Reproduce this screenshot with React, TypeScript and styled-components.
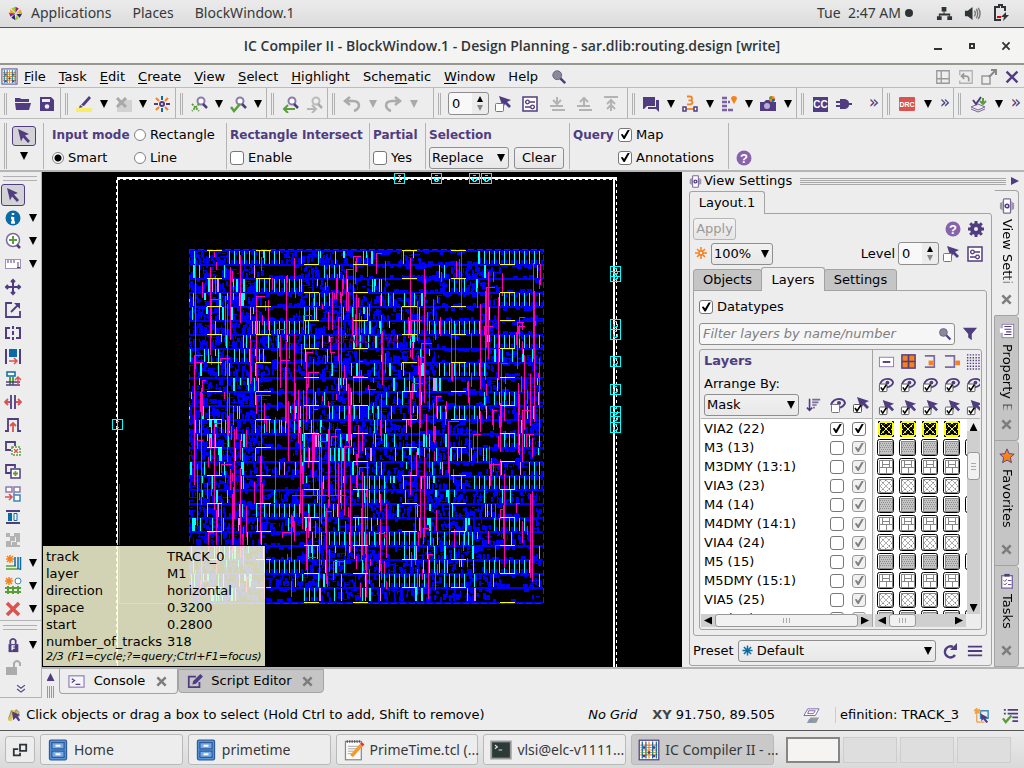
import React from "react";
import styled, { createGlobalStyle, css } from "styled-components";

const purple = "#503c80";
const line = "#a3a3a3";
const bg = "#ededed";
const uiFont = `"DejaVu Sans", sans-serif`;
const shellFont = `"Noto Sans", "Open Sans", sans-serif`;

const Global = createGlobalStyle`
  * { box-sizing: border-box; }
  body { margin: 0; background: ${bg}; }
  button, input, select { font: inherit; color: inherit; margin: 0; }
  svg { display: block; flex: none; }
`;

/* ---------- shell ---------- */
const Page = styled.div`
  height: 100vh;
  display: flex;
  flex-direction: column;
  overflow: hidden;
  font: 13px/16px ${uiFont};
  color: #000;
  background: ${bg};
`;
const TopBar = styled.header`
  flex: none;
  height: 28px;
  display: flex;
  align-items: center;
  gap: 21px;
  padding: 0 14px 1px 8px;
  background: linear-gradient(#ebebeb, #dcdcdc);
  border-bottom: 1px solid #555;
  font: 14px/20px ${shellFont};
  color: #35393b;
`;
const TopItem = styled.button`
  display: flex;
  align-items: center;
  gap: 8px;
  padding: 0;
  border: 0;
  background: none;
  white-space: pre;
`;
const Clock = styled(TopItem)`
  margin-left: auto;
  gap: 4px;
  &::after {
    content: "";
    width: 8px;
    height: 8px;
    border-radius: 50%;
    background: #2e3436;
  }
`;
const Tray = styled.div`
  display: flex;
  align-items: center;
  gap: 11px;
  margin-left: 2px;
`;
const TitleBar = styled.div`
  flex: none;
  height: 37px;
  display: grid;
  grid-template-columns: 100px 1fr 100px;
  align-items: center;
  background: #f4f4f3;
  border-bottom: 2px solid #97978f;
`;
const Title = styled.h1`
  grid-column: 2;
  margin: 0;
  text-align: center;
  white-space: nowrap;
  font: 600 14px/20px "Open Sans", "Noto Sans", sans-serif;
  color: #2f3638;
`;
const WinButtons = styled.div`
  display: flex;
  justify-content: flex-end;
  gap: 14px;
  padding-right: 8px;
`;
const PlainButton = styled.button<{ $w?: number; $h?: number; $on?: boolean }>`
  width: ${(p) => p.$w ?? 24}px;
  height: ${(p) => p.$h ?? 22}px;
  flex: none;
  display: flex;
  align-items: center;
  justify-content: center;
  padding: 0;
  border: 1px solid ${(p) => (p.$on ? purple : "transparent")};
  border-radius: 3px;
  background: ${(p) => (p.$on ? "#d3d2d6" : "none")};
  color: ${purple};
`;
const MenuBar = styled.nav`
  flex: none;
  height: 23px;
  display: flex;
  align-items: center;
  gap: 6px;
  padding: 1px 1px 0;
  border-bottom: 1px solid #bcbcbc;
`;
const Menus = styled.div`
  display: flex;
  align-items: center;
  gap: 13px;
`;
const MenuItem = styled.button`
  padding: 0;
  border: 0;
  background: none;
  u { text-underline-offset: 2px; }
`;
const MenuEnd = styled.div`
  margin-left: auto;
  display: flex;
`;

/* ---------- toolbars ---------- */
const ToolRow = styled.div`
  flex: none;
  height: 31px;
  display: flex;
  border-bottom: 1px solid #bcbcbc;
`;
const ToolGroup = styled.div<{ $w?: number }>`
  width: ${(p) => (p.$w ? `${p.$w}px` : "auto")};
  flex: ${(p) => (p.$w ? "none" : "1")};
  display: flex;
  align-items: center;
  padding-top: 1px;
  border-right: 1px solid #b4b4b4;
  &:last-child { border-right: 0; }
`;
const Handle = styled.span<{ $h?: number }>`
  width: 3px;
  height: ${(p) => p.$h ?? 22}px;
  flex: none;
  margin: 0 4px;
  border: solid #b0b0b0;
  border-width: 0 1px;
`;
const Arrow = styled.button<{ $off?: boolean; $w?: number }>`
  width: ${(p) => p.$w ?? 15}px;
  height: 20px;
  flex: none;
  display: flex;
  align-items: center;
  justify-content: center;
  padding: 0;
  border: 0;
  background: none;
  &::before {
    content: "";
    border: 4px solid transparent;
    border-top: 8px solid ${(p) => (p.$off ? "#aaa" : "#000")};
    border-bottom: 0;
  }
`;
const More = styled.button`
  width: 16px;
  margin-left: auto;
  padding: 0 0 4px;
  border: 0;
  background: none;
  color: ${purple};
  font-size: 17px;
`;
const SpinBox = styled.span<{ $w: number }>`
  width: ${(p) => p.$w}px;
  height: 23px;
  flex: none;
  margin: 0 0 0 3px;
  display: flex;
  align-items: center;
  border: 1px solid #8e8e8e;
  border-radius: 3px;
  background: linear-gradient(90deg, #f8f8f8 60%, #ececec 60%);
  input {
    width: 20px;
    flex: 1;
    min-width: 0;
    padding: 0 0 0 3px;
    border: 0;
    outline: 0;
    background: none;
  }
`;
const OptionBar = styled.div`
  flex: none;
  height: 53px;
  display: flex;
  align-items: center;
  padding-top: 3px;
  border-bottom: 2px solid #b5b5b5;
`;
const OptionGroup = styled.fieldset<{ $w: number; $cols?: string; $bare?: boolean; $wide?: boolean }>`
  width: ${(p) => p.$w}px;
  min-width: 0;
  height: 46px;
  margin: 0;
  padding: 0 0 0 ${(p) => (p.$wide ? 8 : p.$bare ? 0 : 3)}px;
  border: 0;
  border-left: ${(p) => (p.$bare ? "0" : "1px solid #b4b4b4")};
  display: grid;
  grid-template-columns: ${(p) => p.$cols ?? "1fr"};
  grid-template-rows: 23px 23px;
  align-items: center;
  white-space: nowrap;
`;
const Heading = styled.span<{ $size?: number }>`
  font-weight: 700;
  font-size: ${(p) => p.$size ?? 12}px;
  color: ${purple};
`;
const Choice = styled.label`
  display: flex;
  align-items: center;
  gap: 4px;
`;
const Check = styled.input.attrs({ type: "checkbox" })`
  appearance: none;
  width: 14px;
  height: 14px;
  flex: none;
  display: block;
  border: 1px solid #777;
  border-radius: 3px;
  background: #fff;
  &:checked::before {
    content: "";
    display: block;
    width: 12px;
    height: 12px;
    background: #000;
    clip-path: polygon(15% 50%, 30% 45%, 42% 63%, 72% 12%, 90% 12%, 48% 88%, 38% 88%);
  }
  &:disabled { border-color: #999; background: #f0f0f0; }
  &:disabled::before { background: #808080; }
`;
const Radio = styled.input.attrs({ type: "radio" })`
  appearance: none;
  width: 12px;
  height: 12px;
  flex: none;
  border: 1px solid #808080;
  border-radius: 50%;
  background: #fff;
  &:checked { background: radial-gradient(circle, #000 0 3px, #fff 4px); }
`;
const Actions = styled.div`
  display: flex;
  gap: 5px;
`;
const PushButton = styled.button<{ $w: number }>`
  width: ${(p) => p.$w}px;
  height: 22px;
  padding: 0;
  border: 1px solid #8e8e8e;
  border-radius: 3px;
  background: linear-gradient(#f2f2f2, #e6e6e6);
  &:disabled { color: #9a9a9a; border-color: #b5b5b5; }
`;
const SelectWrap = styled.span<{ $w?: number; $pad?: number }>`
  position: relative;
  width: ${(p) => (p.$w ? `${p.$w}px` : "auto")};
  flex: ${(p) => (p.$w ? "none" : "1")};
  display: block;
  select {
    appearance: none;
    display: block;
    width: 100%;
    height: 22px;
    padding: 0 0 0 ${(p) => p.$pad ?? 2}px;
    border: 1px solid #8e8e8e;
    border-radius: 3px;
    background: linear-gradient(#f1f1f1, #e8e8e8);
    outline: 0;
  }
  &::after {
    content: "";
    position: absolute;
    right: 4px;
    top: 7px;
    border: 4px solid transparent;
    border-top: 8px solid #000;
    border-bottom: 0;
    pointer-events: none;
  }
  svg { position: absolute; left: 3px; top: 4px; }
`;

/* ---------- work area ---------- */
const Middle = styled.div`
  flex: 1;
  min-height: 0;
  display: flex;
`;
const SideTools = styled.div`
  width: 42px;
  flex: none;
  display: flex;
  flex-direction: column;
  border-right: 1px solid #b4b4b4;
  border-bottom: 1px solid #b4b4b4;
  overflow: hidden;
`;
const SideHandle = styled.span<{ $line?: boolean }>`
  flex: none;
  height: ${(p) => (p.$line ? 13 : 11)}px;
  padding: 4px 4px 0 3px;
  border-top: ${(p) => (p.$line ? "1px solid #b4b4b4" : "0")};
  &::before {
    content: "";
    display: block;
    height: 3px;
    border: solid #b0b0b0;
    border-width: 1px 0;
  }
`;
const SideRow = styled.div`
  flex: none;
  height: 23px;
  display: flex;
  align-items: center;
  padding-left: 1px;
`;
const Center = styled.div`
  flex: 1;
  min-width: 0;
  display: flex;
  flex-direction: column;
`;
const Upper = styled.div`
  flex: 1;
  min-height: 0;
  display: flex;
`;
const Canvas = styled.main`
  position: relative;
  flex: 1;
  min-width: 0;
  overflow: hidden;
  background: #000;
`;
const Tip = styled.div`
  position: absolute;
  left: 0;
  bottom: 0;
  width: 224px;
  padding: 2px 0 2px 3px;
  border: 1px solid #000;
  background: rgba(253, 253, 217, 0.83);
  box-shadow: 0 0 12px rgba(0, 0, 0, 0.5);
  dl {
    margin: 0;
    display: grid;
    grid-template-columns: 121px 1fr;
    line-height: 17px;
  }
  dd { margin: 0; }
  p {
    margin: 0;
    font: italic 11px/14px ${uiFont};
    white-space: nowrap;
  }
`;
const Dock = styled.aside`
  width: 342px;
  flex: none;
  display: flex;
  flex-direction: column;
  padding: 0 5px 1px 7px;
`;
const DockHead = styled.div`
  flex: none;
  height: 18px;
  display: flex;
  align-items: center;
  gap: 2px;
`;
const Grip = styled.span`
  flex: 1;
  height: 7px;
  margin: 0 3px 0 6px;
  background: repeating-linear-gradient(#a8a8a8 0 1px, transparent 1px 2px);
`;
const DockBody = styled.div`
  flex: 1;
  min-height: 0;
  display: flex;
  gap: 2px;
`;
const DockMain = styled.div`
  flex: 1;
  min-width: 0;
  display: flex;
  flex-direction: column;
  padding-top: 1px;
`;
const Tabs = styled.div`
  flex: none;
  display: flex;
  align-items: flex-end;
`;
const Tab = styled.button<{ $on?: boolean; $w: number; $h: number }>`
  width: ${(p) => p.$w}px;
  height: ${(p) => p.$h}px;
  padding: 0;
  border: 1px solid ${line};
  border-bottom: ${(p) => (p.$on ? "0" : `1px solid ${line}`)};
  border-radius: 3px 3px 0 0;
  background: ${(p) => (p.$on ? bg : "#c5c5c5")};
  margin-bottom: -1px;
  z-index: ${(p) => (p.$on ? 1 : 0)};
  position: relative;
  & + & { margin-left: -1px; }
`;
const Frame = styled.div<{ $pad: string }>`
  flex: 1;
  min-height: 0;
  display: flex;
  flex-direction: column;
  padding: ${(p) => p.$pad};
  border: 1px solid ${line};
  border-radius: 0 3px 3px 3px;
`;
const Row = styled.div<{ $h: number; $gap?: number; $end?: number }>`
  flex: none;
  height: ${(p) => p.$h}px;
  display: flex;
  align-items: center;
  gap: ${(p) => p.$gap ?? 0}px;
  padding-right: ${(p) => p.$end ?? 0}px;
`;
const Spacer = styled.span`
  flex: 1;
`;
const Search = styled.label`
  flex: 1;
  height: 22px;
  display: flex;
  align-items: center;
  padding: 0 2px 0 3px;
  border: 1px solid #8e8e8e;
  border-radius: 3px;
  background: #f6f6f6;
  input {
    flex: 1;
    min-width: 0;
    padding: 0;
    border: 0;
    outline: 0;
    background: none;
    font-style: italic;
  }
  input::placeholder { color: #808080; }
`;
const LayerBox = styled.div`
  flex: 1;
  min-height: 0;
  margin-top: 2px;
  display: grid;
  grid-template-columns: 171px 1fr;
  border: 1px solid ${line};
  border-radius: 3px;
  padding: 0 1px 2px;
`;
const Pane = styled.div<{ $split?: boolean }>`
  min-width: 0;
  min-height: 0;
  display: flex;
  flex-direction: column;
  border-left: ${(p) => (p.$split ? `1px solid ${line}` : "0")};
  padding-left: ${(p) => (p.$split ? "2px" : "0")};
`;
const PaneHead = styled.div<{ $icons?: boolean }>`
  flex: none;
  height: 69px;
  padding: ${(p) => (p.$icons ? "0" : "3px 0 0 3px")};
  border-bottom: 1px solid #b4b4b4;
  overflow: hidden;
`;
const HeadCells = styled.div`
  height: 23px;
  display: grid;
  grid-template-columns: repeat(5, 22px);
  justify-items: center;
  align-items: center;
`;
const Scroll = styled.div`
  flex: 1;
  min-height: 0;
  display: flex;
  overflow: hidden;
`;
const ListBg = styled.div`
  flex: 1;
  min-width: 0;
  overflow: hidden;
  background: #fff;
`;
const LayerTable = styled.table`
  border-collapse: collapse;
  table-layout: fixed;
  td { padding: 0; height: 19px; line-height: 16px; }
  td:first-child { width: 125px; padding-left: 3px; }
  td + td { width: 22px; padding-left: 4px; }
`;
const SwatchTable = styled.table`
  border-collapse: collapse;
  table-layout: fixed;
  width: 110px;
  td { padding: 0 0 0 2px; height: 19px; width: 22px; }
`;
const bar = css`
  flex: none;
  display: flex;
  align-items: center;
  background: #cfcfcf;
  span {
    flex: none;
    border: 1px solid #999;
    border-radius: 3px;
    background: #f1f1f1;
    display: flex;
    align-items: center;
    justify-content: center;
  }
`;
const HBar = styled.div<{ $thumb: number; $w?: number }>`
  ${bar}
  height: 13px;
  width: ${(p) => (p.$w ? `${p.$w}px` : "auto")};
  justify-content: flex-start;
  padding: 0 3px;
  gap: 3px;
  span { width: ${(p) => p.$thumb}px; height: 13px; }
  span::before {
    content: "";
    width: 7px;
    height: 5px;
    background: repeating-linear-gradient(90deg, #aaa 0 1px, transparent 1px 3px);
  }
  i:last-child { margin-left: auto; }
`;
const VBar = styled.div`
  ${bar}
  width: 13px;
  flex-direction: column;
  background: linear-gradient(#ededed 12px, #cfcfcf 12px);
  padding: 4px 0 2px;
  span { width: 13px; height: 28px; margin-top: 21px; }
  span::before {
    content: "";
    width: 5px;
    height: 7px;
    background: repeating-linear-gradient(#aaa 0 1px, transparent 1px 3px);
  }
  i:last-child { margin-top: auto; }
`;
const Tri = styled.i<{ $d: "l" | "r" | "u" | "d"; $c?: string }>`
  flex: none;
  width: 8px;
  height: 8px;
  background: ${(p) => p.$c ?? "#000"};
  clip-path: ${(p) =>
    ({
      l: "polygon(0 50%, 100% 0, 100% 100%)",
      r: "polygon(0 0, 100% 50%, 0 100%)",
      u: "polygon(50% 0, 100% 100%, 0 100%)",
      d: "polygon(0 0, 100% 0, 50% 100%)",
    })[p.$d]};
`;
const SpinArrows = styled.span`
  width: 16px;
  display: flex;
  flex-direction: column;
  align-items: center;
  gap: 3px;
  i { width: 6px; height: 6px; }
`;
const SideTabs = styled.div`
  width: 25px;
  flex: none;
  display: flex;
  flex-direction: column;
`;
const SideTab = styled.div<{ $h: number; $on?: boolean }>`
  flex: 0 0 ${(p) => p.$h}px;
  min-height: 0;
  display: flex;
  flex-direction: column;
  align-items: center;
  gap: 5px;
  padding: 7px 0 8px;
  border: 1px solid ${line};
  border-left-color: ${(p) => (p.$on ? bg : line)};
  border-radius: 0 4px 4px 0;
  background: ${(p) => (p.$on ? bg : "#c5c5c5")};
  & + & { border-top: 0; }
`;
const SideLabel = styled.button`
  flex: 1;
  min-height: 0;
  padding: 0;
  border: 0;
  background: none;
  writing-mode: vertical-rl;
  text-align: left;
  white-space: nowrap;
  overflow: hidden;
  mask-image: linear-gradient(#000 82%, transparent);
`;
const CloseX = styled.button`
  flex: none;
  padding: 0;
  border: 0;
  background: none;
`;

/* ---------- bottom ---------- */
const ConsoleBar = styled.div`
  flex: none;
  height: 31px;
  display: flex;
  align-items: flex-start;
  border-top: 2px solid #b4b4b4;
`;
const ConsoleGrip = styled.div`
  width: 17px;
  height: 29px;
  display: flex;
  flex-direction: column;
  align-items: center;
  gap: 5px;
  padding-top: 4px;
  &::after {
    content: "";
    width: 7px;
    height: 12px;
    background: repeating-linear-gradient(90deg, #999 0 1px, transparent 1px 2px);
  }
`;
const BottomTab = styled.div<{ $on?: boolean; $w: number }>`
  width: ${(p) => p.$w}px;
  height: ${(p) => (p.$on ? 25 : 24)}px;
  display: flex;
  align-items: center;
  padding: 0 8px;
  border: 1px solid ${line};
  border-top: ${(p) => (p.$on ? "0" : `1px solid ${line}`)};
  border-radius: 0 0 4px 4px;
  background: ${(p) => (p.$on ? bg : "#c5c5c5")};
  button:not(:last-child) {
    flex: 1;
    border: 0;
    padding: 0;
    background: none;
  }
`;
const StatusBar = styled.footer`
  flex: none;
  height: 32px;
  display: flex;
  align-items: center;
  padding: 2px 5px 0 6px;
  white-space: nowrap;
`;
const Coord = styled.span`
  margin: 0 28px 0 15px;
  b { color: #444; }
`;
const Clip = styled.span`
  margin: 0 14px 0 15px;
  padding-left: 4px;
  border-left: 1px solid #ccc;
`;
const StatusIcons = styled.div`
  display: flex;
  gap: 12px;
`;
const TaskBar = styled.footer`
  flex: none;
  height: 38px;
  display: flex;
  align-items: center;
  gap: 5px;
  padding: 0 13px 0 5px;
  border-top: 1px solid #555;
  background: linear-gradient(#eaeaea, #dadada);
  font: 14px/20px ${shellFont};
  color: #35393b;
`;
const Task = styled.button<{ $on?: boolean }>`
  flex: 1;
  min-width: 0;
  height: 31px;
  display: flex;
  align-items: center;
  gap: 5px;
  padding: 0 6px;
  border: 1px solid #b9b9b9;
  border-radius: 3px;
  background: ${(p) => (p.$on ? "#c9c9c9" : "#ededed")};
  white-space: nowrap;
`;
const ShowDesktop = styled(Task)`
  flex: 0 0 30px;
  height: 27px;
`;
const Pager = styled.div`
  flex: none;
  width: 225px;
  display: grid;
  grid-template-columns: repeat(4, 1fr);
  gap: 3px;
  margin-left: 7px;
`;
const Desk = styled.button<{ $on?: boolean }>`
  height: 26px;
  padding: 0;
  border: ${(p) => (p.$on ? "2px solid #868686" : "1px solid #cdcdcd")};
  background: ${(p) => (p.$on ? "#f5f4f2" : "#dedede")};
`;

/* ---------- icons ---------- */
const green = "#5a9e3a";
const red = "#d9534f";
const orange = "#f5821f";
const blue = "#0a6aa6";
const grey = "#ababab";

const cursor = "M3 2l11 5-4 1.500 5 5.500-2 2-5-5.500-2 4z";
const icons: Record<string, React.ReactNode> = {
  open: <path fill={purple} d="M1 3h5l1 1h8v3H1zM1 8h16l-2 7H2z" />,
  save: <><path fill={purple} d="M2 2h11l3 3v11H2z" /><path fill="#ededed" d="M4 4h8v3H4z" /><circle cx="9" cy="11.500" r="2.300" fill="#ededed" /></>,
  marker: <><path fill="#f6ee6b" d="M1 13h16v4H1z" /><path fill={purple} d="M14 1l2 2-7 8-3-1zM5 10l3 2-4 1z" /></>,
  greyx: <><path fill="#d2d2d2" d="M5 5h13v12H3v-6z" /><path stroke="#a9a9a9" strokeWidth="3" d="M3 3l9 9M12 3l-9 9" /></>,
  burst: <><circle cx="9" cy="9" r="2" fill="none" stroke={purple} strokeWidth="2" /><path stroke={blue} strokeWidth="2" d="M9 1v4M9 13v4" /><path stroke={purple} strokeWidth="2" d="M1 9h4M13 9h4" /><path stroke={orange} strokeWidth="2" d="M3 3l3 3M15 3l-3 3M3 15l3-3M15 15l-3-3" /></>,
  sun: <path stroke={orange} strokeWidth="1.500" fill="none" d="M8 2v4M8 10v4M2 8h4M10 8h4M4 4l3 3M12 4L9 7M4 12l3-3M12 12L9 9M6 8a2 2 0 104 0 2 2 0 10-4 0" />,
  zoomfit: <><circle cx="11" cy="6" r="3.500" fill="#fff" stroke="#8c7bb0" strokeWidth="2" /><path stroke={purple} strokeWidth="2.500" d="M13 9l4 4" /><path stroke={green} strokeWidth="2" strokeDasharray="2 1" d="M2 9l7 7M9 9l-7 7" /></>,
  zoomcheck: <><circle cx="11" cy="6" r="3.500" fill="#fff" stroke="#8c7bb0" strokeWidth="2" /><path stroke={purple} strokeWidth="2.500" d="M13 9l4 4" /><path stroke={green} strokeWidth="2.500" fill="none" d="M2 12l3 4 6-7" /></>,
  zoomback: <><circle cx="11" cy="6" r="3.500" fill="#fff" stroke="#8c7bb0" strokeWidth="2" /><path stroke={purple} strokeWidth="2.500" d="M13 9l4 4" /><path stroke={green} strokeWidth="2" fill="none" d="M14 14H3M7 10l-4 4 4 4" /></>,
  zoomfwd: <><circle cx="11" cy="6" r="3.500" fill="#eee" stroke="#bbb" strokeWidth="2" /><path stroke="#aaa" strokeWidth="2.500" d="M13 9l4 4" /><path stroke="#b5b5b5" strokeWidth="2" fill="none" d="M2 14h9M7 10l4 4-4 4" /></>,
  undo: <path fill="none" stroke={grey} strokeWidth="2.500" d="M7 2L2 6l5 4M3 6h7q6 0 6 5-1 4-5 5" />,
  redo: <path fill="none" stroke={grey} strokeWidth="2.500" d="M11 2l5 4-5 4M15 6H8q-6 0-6 5 1 4 5 5" />,
  boxcursor: <><g transform="translate(2 -1)"><path fill={purple} d="M3 2l12 4-4 2 4 4-2 2-4-4-2 4z" /></g><rect x="1.500" y="8.500" width="8" height="8" rx="1" fill="#fff" stroke="#777" /></>,
  checkcursor: <><g transform="translate(2 -1)"><path fill={purple} d="M3 2l12 4-4 2 4 4-2 2-4-4-2 4z" /></g><rect x="1.500" y="8.500" width="8" height="8" rx="1" fill="#fff" stroke="#555" /><path stroke="#000" strokeWidth="1.600" fill="none" d="M3 12l2 3 4-6" /></>,
  eye: <><path fill="none" stroke={purple} strokeWidth="2" d="M2 9q2-6 8-6 5 0 6 4-1 4-7 5" /><circle cx="10" cy="7" r="2" fill={purple} /><rect x="2.500" y="8.500" width="8" height="8" rx="1" fill="#fff" stroke="#777" /></>,
  eyecheck: <><path fill="none" stroke={purple} strokeWidth="2" d="M2 9q2-6 8-6 5 0 6 4-1 4-7 5" /><circle cx="10" cy="7" r="2" fill={purple} /><rect x="1.500" y="8.500" width="8" height="8" rx="1" fill="#fff" stroke="#555" /><path stroke="#000" strokeWidth="1.600" fill="none" d="M3 12l2 3 4-6" /></>,
  sliders: <><rect x="2" y="2" width="14" height="14" fill="#fff" stroke={purple} strokeWidth="1.500" /><path stroke={purple} strokeWidth="1.500" d="M4 7h10M4 12h10" /><circle cx="6.500" cy="7" r="1.800" fill="#fff" stroke={purple} strokeWidth="1.300" /><circle cx="11.500" cy="12" r="1.800" fill="#fff" stroke={purple} strokeWidth="1.300" /></>,
  down: <path stroke="#b3b3b3" strokeWidth="2" fill="none" d="M2 11h13M4 15h13M9 2v7M5 5l4 4 4-4" />,
  up: <path stroke="#b3b3b3" strokeWidth="2" fill="none" d="M2 11h13M4 15h13M9 10V3M5 7l4-4 4 4" />,
  top: <path stroke="#b3b3b3" strokeWidth="2" fill="none" d="M2 2h14M9 16V5M5 9l4-4 4 4M5 14l4-4 4 4" />,
  chat: <><path fill={purple} d="M1 2h12v9H5l-3 3H1z" /><path fill={purple} d="M14 5h3v12l-3-3H6v-2h8z" /></>,
  three: <><path fill="none" stroke={orange} strokeWidth="1.800" d="M6 1.500h3q2 0 2 2T9 5.300H7.500H9q2.500 0 2.500 2T9 9.300H6" /><path stroke={orange} strokeWidth="1.800" d="M5 14h8" /><path fill="#fff" stroke={purple} strokeWidth="1.500" d="M2 12h3v4H2zM13 12h3v4h-3z" /></>,
  bricks: <><path stroke="#7b62a3" strokeWidth="2.500" strokeDasharray="5 1" d="M2 3h6M2 7h8M2 11h6M2 15h12" /><path fill={orange} d="M14 9l-3-5q0-3 3-3t3 3z" /></>,
  camera: <><path fill={purple} d="M1 7h4l2-2h5l1 2h4v9H1z" /><circle cx="8" cy="11" r="3" fill="#b9add0" /><circle cx="13" cy="4" r="3" fill={orange} /><path fill={blue} d="M13 4h3a3 3 0 01-3 3z" /><path fill={green} d="M13 1v3h-3a3 3 0 013-3z" /></>,
  cc: <><rect x="2" y="2" width="15" height="15" fill={purple} /><text x="9.500" y="13" textAnchor="middle" fontSize="10" fontWeight="700" fill="#fff">CC</text></>,
  plug: <path fill={purple} d="M5 4h5q4 1 4 4h3v2h-3q0 3-4 4H5v-2H1v-2h4V8H1V6h4z" />,
  drc: <><rect x="1" y="2" width="16" height="14" rx="1" fill={red} /><text x="9" y="12" textAnchor="middle" fontSize="7" fontWeight="700" fill="#fff">DRC</text></>,
  layers: <><path fill="none" stroke="#7b62a3" d="M2 12l7-3 7 3-7 3zM2 14l7 3 7-3" /><path stroke={purple} strokeWidth="2" fill="none" d="M4 5l3 4 5-7" /><path stroke={green} strokeWidth="2" fill="none" d="M14 3v6M11 6l3 3 3-3" /></>,
  cursor: <path fill={purple} d={cursor} />,
  info: <><circle cx="9" cy="9" r="7.500" fill={blue} /><path stroke="#fff" strokeWidth="2.500" d="M9 8v6M9 4v2M7 13.500h4M7 9h2" /></>,
  zoomin: <><circle cx="9" cy="8" r="6.500" fill="#fff" stroke="#7b6a9f" strokeWidth="1.500" /><path stroke={green} strokeWidth="2" d="M9 4v8M5 8h8" /><path stroke={purple} strokeWidth="2.500" d="M13 13l3 3" /></>,
  ruler: <><rect x="1.500" y="4.500" width="15" height="9" fill="#fff" stroke="#9c90b5" /><path stroke={purple} d="M4 5v3M7 5v3M10 5v3M14 7v6M13 12.500h3" /></>,
  move: <path stroke={purple} strokeWidth="2" fill="none" d="M9 2v14M2 9h14M7 4l2-2 2 2M7 14l2 2 2-2M4 7L2 9l2 2M14 7l2 2-2 2" />,
  resize: <><path stroke={purple} strokeWidth="1.800" fill="none" d="M8 2H2v14h14v-6M7 11l8-8" /><path fill={purple} d="M10 2h6v6z" /></>,
  mirror: <path stroke={purple} strokeWidth="2" fill="none" d="M6 4H2v10h4M12 4h4v10h-4M9 2v3M9 7v4M9 13v3" />,
  spread: <><path stroke={purple} strokeWidth="2" d="M2 2v15M16 2v15" /><path fill={blue} d="M5 2h8v8H5z" /><path stroke={red} strokeWidth="1.500" fill="none" d="M5 14h8M10 11l3 3-3 3" /></>,
  align: <><path fill="#fff" stroke={blue} strokeWidth="1.500" d="M3 2h8v4H3z" /><path stroke={green} strokeWidth="2" d="M6 7v8M9 7v8" /><path stroke={purple} strokeWidth="1.500" d="M2 12h14M2 15h14" /><path stroke={red} strokeWidth="1.500" fill="none" d="M14 15V7M11 10l3-3 3 3" /></>,
  split: <><path stroke={purple} strokeWidth="1.800" d="M7 2v14M11 2v14" /><path stroke={red} strokeWidth="1.800" fill="none" d="M6 9H1M4 6L1 9l3 3M12 9h5M14 6l3 3-3 3" /></>,
  pulse: <><path stroke={purple} strokeWidth="1.800" fill="none" d="M1 15h3V3h10v12h3" /><path stroke={red} strokeWidth="1.800" fill="none" d="M9 16V7M6 10l3-3 3 3" /></>,
  remove: <><path stroke={purple} strokeWidth="1.800" fill="none" d="M7 11H2V3h9v4" /><path stroke={green} strokeDasharray="2 1" strokeWidth="1.500" fill="#fff" d="M8 8h8v8H8z" /><path stroke={red} strokeWidth="1.500" d="M10 10l4 4M14 10l-4 4" /></>,
  add: <><path stroke={purple} strokeWidth="1.800" fill="none" d="M7 11H2V3h9v3" /><path stroke={purple} strokeWidth="1.500" fill="#fff" d="M7 7h9v9H7z" /><path stroke={green} strokeWidth="1.800" d="M11.500 9v5M9 11.500h5" /></>,
  group: <><path stroke="#8c7bb0" strokeWidth="1.500" fill="#fff" d="M2 2h6v5H2zM10 2h6v5h-6zM10 7v3" /><path stroke="#3c86b8" strokeWidth="1.500" fill="#fff" d="M10 10h6v6h-6z" /><path stroke={red} strokeWidth="1.500" fill="none" d="M1 12h6M5 9l3 3-3 3" /></>,
  distribute: <><path stroke={purple} strokeWidth="2" d="M2 3h14M2 15h14" /><path fill={blue} d="M4 5h4v8H4z" /><path stroke={blue} fill="#fff" d="M10 5.500h3v7h-3z" /></>,
  grid: <path fill="#b3b3b3" d="M2 2h4v4H2zM10 2h6v4h-6zM6 5h5v5H6zM12 6h4v5h-4zM2 10h5v6H2zM8 11h5v5H8zM2 14h14v2H2z" />,
  route: <><path stroke={green} strokeWidth="1.500" fill="none" d="M2 12h10M2 15h14" /><path stroke={blue} strokeWidth="1.500" fill="none" d="M11 3v9M14 3v12M16.500 3v13" /><path stroke={orange} strokeWidth="1.500" d="M6 1v8M2 5h8M3 2l6 6M9 2L3 8" /></>,
  rails: <><path stroke={green} strokeWidth="2" fill="none" d="M1 11h16M1 15h16M4 9v8M9 9v8M14 9v8" /><path stroke={orange} strokeWidth="1.500" d="M5 0v8M1 4h8M2 1l6 6M8 1L2 7" /><circle cx="14" cy="4" r="3" fill="#fff" stroke="#3c86b8" /></>,
  redx: <path stroke={red} strokeWidth="3.500" d="M3 3l12 12M15 3L3 15" />,
  lock: <><path fill={purple} d="M4 8h11v9H4z" /><path stroke={purple} strokeWidth="2" fill="none" d="M6 8V4q3-4 6 0v4" /><path stroke="#fff" strokeWidth="1.500" fill="none" d="M8 15v-5h3M8 12.500h3" /></>,
  unlock: <><path fill={grey} d="M2 8h11v8H2z" /><path stroke={grey} strokeWidth="2" fill="none" d="M10 8V4q3-4 6 0v3" /></>,
  help: <><circle cx="9" cy="9" r="7.500" fill="#8763ad" /><text x="9" y="13.500" textAnchor="middle" fontSize="13" fontWeight="700" fill="#fff">?</text></>,
  gear: <><circle cx="9" cy="9" r="4" fill="none" stroke={purple} strokeWidth="4" /><path stroke={purple} strokeWidth="3" d="M9 1v3M9 14v3M1 9h3M14 9h3M3.200 3.200l2 2M12.800 12.800l2 2M14.800 3.200l-2 2M5.200 12.800l-2 2" /></>,
  lens: <><path stroke={purple} strokeWidth="2.800" d="M10 10l6 6" /><circle cx="7" cy="7" r="5" fill="#8b8994" stroke="#655694" /></>,
  funnel: <path fill={purple} d="M1 2h16l-6 7v7l-4-3V9z" />,
  minus: <><rect x="1.500" y="4.500" width="15" height="10" fill="#fff" stroke="#8c7bb0" /><path stroke={purple} strokeWidth="2" d="M5 9.500h8" /></>,
  quad: <><rect x="2" y="2" width="14" height="14" fill={orange} stroke={purple} strokeWidth="1.500" /><path stroke={purple} strokeWidth="1.800" d="M9 2v14M2 9h14" /></>,
  endin: <><path stroke="#7b6a9f" strokeWidth="1.800" fill="none" d="M3 3h10v12H3" /><path fill={orange} d="M7 8h5v5H7z" /></>,
  endout: <><path stroke="#7b6a9f" strokeWidth="1.800" fill="none" d="M1 3h10v12H1" /><path fill={orange} d="M12 8h5v5h-5z" /></>,
  dots: <path stroke={purple} strokeWidth="1.500" strokeDasharray="1.500 1.500" d="M1 2h16M1 5h16M1 8h16M1 11h16M1 14h16M1 17h16" />,
  sort: <><path stroke={purple} strokeWidth="1.800" fill="none" d="M4 2v13M1 12l3 3 3-3" /><path stroke="#7b6a9f" strokeWidth="1.800" d="M7 3h9M7 6h7M7 9h5M8 12h2" /></>,
  view: <><path fill="#9a97a3" d="M1 6l3-2v10l-3-2zM17 6l-3-2v10l3-2z" /><rect x="5" y="1" width="8" height="16" rx="1" fill="#fff" stroke="#7b6a9f" strokeWidth="1.500" /><circle cx="9" cy="9" r="2" fill="none" stroke={purple} strokeWidth="1.800" /></>,
  prop: <><rect x="3.500" y="1.500" width="13" height="15" fill="#fff" stroke="#8c7bb0" /><path stroke={purple} strokeWidth="1.200" d="M6 4h8M6 7h8M8 10h6M6 13h8" /><path fill="#fff" d="M1 6h5v5H1z" /></>,
  star: <path fill={orange} stroke={purple} d="M9 1l2.400 5.300 5.600.6-4.200 3.900 1.200 5.700-5-2.900-5 2.900 1.200-5.700L1 6.900l5.600-.6z" />,
  tasks: <><rect x="3" y="3" width="12" height="14" fill="#fff" stroke="#7b6a9f" strokeWidth="1.500" /><path fill={purple} d="M6 1h6v3H6z" /><path stroke={purple} fill="none" d="M5 8l1.500 1.500L9 7M10 8.500h4M5 12l1.500 1.500L9 11M10 13h4" /></>,
  x: <path stroke="#7d7d7d" strokeWidth="3" d="M4 4l10 10M14 4L4 14" />,
  bigx: <path stroke={purple} strokeWidth="3" d="M2 2l14 14M16 2L2 16" />,
  refresh: <><path fill="none" stroke={purple} strokeWidth="2.500" d="M12 5a5.500 5.500 0 102 8" /><path fill={purple} d="M9 8l7-7v7z" /></>,
  burger: <path stroke={purple} strokeWidth="2" d="M1 4h16M1 9h16M1 14h16" />,
  term: <><rect x="1" y="3" width="16" height="12" fill="#f5f4f8" stroke="#8c7bb0" strokeWidth="1.200" /><path stroke={purple} strokeWidth="1.200" fill="none" d="M4 6l3 2-3 2M8 12h5" /></>,
  edit: <><path fill="none" stroke={purple} strokeWidth="2" d="M10 4H2v12h12v-6" /><path fill={purple} d="M15 1l3 3-8 8-4 1 1-4z" /></>,
  pan: <path fill="none" stroke="#999" strokeWidth="1.500" d="M2 2h14v14H2zM7 2v14M2 11h14" />,
  restore: <><path fill="none" stroke="#b2b2b2" strokeWidth="1.500" d="M2 7V2h14v14H2v-3" /><path fill="none" stroke="#999" strokeWidth="2" d="M7 5L4 8l3 3M4 8h5q4 0 3 6" /></>,
  popout: <><rect x="2" y="8" width="8" height="8" fill="none" stroke="#999" strokeWidth="1.500" /><path stroke="#888" strokeWidth="2" fill="none" d="M9 9l7-7M11 2h5v5" /></>,
  label: <><path fill="#dfc54a" d="M2 15L6 3l3 1 3-2 3 6-3 3-4-1-2 6z" /><path stroke="#8b8577" fill="none" d="M3 13L6 4l3 8M11 4v8M11 4q5 0 3 4 2 4-3 4" /><path fill={purple} d="M7 5l9 4-3 1 3 5-2 1-3-4-3 3z" /></>,
  plane: <><path fill="#fff" stroke="#7b62a3" d="M5 2h12l-4 7H1zM6 4h7l-2 3H5z" /><path fill="#9a9a9a" d="M8 11h9l-3 6H4z" /><path fill="#6c9bd0" d="M6 13h4v3H6z" /></>,
  pick: <><path fill="none" stroke={orange} d="M4 8v8h8" /><path fill="none" stroke="#3c86b8" strokeWidth="1.500" d="M8 4h8v8H8z" /><path stroke="#f0a03c" strokeWidth="1.500" d="M4 1v7M1 4h7M2 2l5 5M7 2L2 7" /><path fill={purple} d="M8 7l8 4-3 1 3 4-2 1-3-4-2 2z" /></>,
  list: <><path stroke={purple} strokeWidth="2" strokeDasharray="2 2 12 0" d="M2 3h15M2 7h15" /><path stroke={purple} strokeWidth="2" d="M11 11h6M11 15h6" /><path stroke={green} strokeWidth="2.500" fill="none" d="M1 12l3 4 6-7" /></>,
  net: <path fill="#2e3436" d="M6 2h5v5H9v2h6v3h2v4h-5v-4h2v-1H4v1h2v4H1v-4h2V9h5V7H6z" />,
  sound: <><path fill="#2e3436" d="M1 6h3l5-4v14l-5-4H1z" /><path stroke="#777" strokeWidth="1.500" fill="none" d="M11 6q2 3 0 6M13 4q3 5 0 10M15 3q4 6 0 12" /></>,
  battery: <><path fill="none" stroke="#2e3436" strokeWidth="2" d="M13 7V3h-3V1H7v2H3v13h6" /><path fill="#d00" d="M5 12h4v2H5z" /><path fill="#2e3436" d="M14 8l-5 5h3l-1 4 6-6h-3z" /></>,
  centos: <><path fill="#9ccd2a" d="M4 3l5-2v7z" /><path fill="#932279" d="M9 1l4 2-4 5zM1 8l8 1-6 4z" /><path fill="#efa724" d="M15 4l2 4-7 1z" /><path fill="#262577" d="M8 10l1 7-5-3zM14 14l-4-4 7-1z" /><path fill="#efa724" d="M3 4l5 4-6 1z" /><path fill="#9ccd2a" d="M9 17l1-6 3 4z" /></>,
  cabinet: <><rect x="2" y="1" width="14" height="16" rx="1" fill="#5a93d6" stroke="#2d5c9c" /><path stroke="#2d5c9c" fill="#78abe5" d="M4 3h10v5H4zM4 10h10v5H4z" /><path stroke="#fff" strokeWidth="1.500" d="M7 5.500h4M7 12.500h4" /></>,
  note: <><rect x="2" y="2" width="13" height="15" fill="#fafafa" stroke="#888" /><path stroke="#555" strokeDasharray="1 1" strokeWidth="2" d="M3 2h11" /><path stroke="#aaa" strokeWidth=".8" d="M4 6h9M4 8h9M4 10h6M4 12h5" /><path stroke="#f29a2e" strokeWidth="3" d="M7 14l8-9" /><path stroke="#e33" strokeWidth="3" d="M15 5l1.500-1.500" /></>,
  console: <><rect x="1" y="2" width="16" height="14" fill="#2c3a38" stroke="#999" strokeWidth="1.500" /><path stroke="#ddd" fill="none" d="M4 5l2 1.500L4 8M7 9h3" /></>,
  chip: <><rect x="1" y="1" width="16" height="16" fill="#fff" stroke={purple} /><path stroke={orange} d="M2 5h14M2 9h14M2 13h14M9 2v14" /><path stroke={blue} d="M3.500 2v14M6.500 2v14M12 2v14M15 2v14" /><path stroke={green} strokeWidth=".6" d="M2 7h14M2 11h14" /><path fill={purple} d="M4 6h2v2H4zM12 6h2v2h-2zM8 10h2v2H8zM4 13h2v2H4zM12 13h2v2h-2z" /></>,
  desk: <path fill="none" stroke="#2e3436" strokeWidth="2" d="M7 8H2v7h7v-3M9 3h7v7H9z" />,
  min: <path stroke="#2e3436" strokeWidth="2" d="M5 12h8" />,
  max: <path stroke="#2e3436" strokeWidth="2" fill="none" d="M7 7h4v4H7z" />,
  close: <path stroke="#2e3436" strokeWidth="2" d="M5 5l8 8M13 5l-8 8" />,
  asterisk: <path stroke={blue} strokeWidth="2" d="M9 2v14M2 9h14M4 4l10 10M14 4L4 14" />,
  chevrons: <path stroke={purple} strokeWidth="1.500" fill="none" d="M4 4l5 4 5-4M4 9l5 4 5-4" />,
};
const Icon = ({ n, s = 18 }: { n: string; s?: number }) => (
  <svg width={s} height={s} viewBox="0 0 18 18" fontFamily="Liberation Sans, sans-serif" aria-hidden="true">
    {icons[n]}
  </svg>
);
const Tool = ({ n, w, s, h, on }: { n: string; w?: number; s?: number; h?: number; on?: boolean }) => (
  <PlainButton $w={w} $h={h} $on={on} aria-label={n}>
    <Icon n={n} s={s ?? 18} />
  </PlainButton>
);
const Spin = ({ w, label }: { w: number; label: string }) => (
  <SpinBox $w={w}>
    <input defaultValue="0" aria-label={label} />
    <SpinArrows><Tri $d="u" /><Tri $d="d" $c="#888" /></SpinArrows>
  </SpinBox>
);

/* ---------- routed block drawing ---------- */
const X0 = 147;
const X1 = 501;
const Y0 = 78;
const PITCH = 14.06;
const ROWS = 25;
const clearAreas = [
  [[376, 400], [420, 476]], [[346, 436], [500, 536], [262, 300]], [[330, 345], [390, 440], [500, 536]], [[262, 300], [440, 486]],
  [[262, 292], [440, 480], [500, 534]], [[265, 298], [500, 534]], [[440, 484]], [[265, 300], [356, 376], [440, 486]],
  [[305, 322], [500, 530]], [[262, 326], [354, 374], [442, 480], [500, 520]], [[262, 296], [354, 372], [440, 484]], [[262, 290]],
  [[408, 440], [470, 520]], [[264, 286], [470, 498]], [[262, 286], [488, 520]], [[450, 486]],
  [[264, 300], [500, 530]], [[232, 262], [370, 400]], [[264, 304], [350, 370], [496, 534]], [[390, 410], [500, 530]],
  [[264, 304], [360, 402]], [[266, 300], [490, 536]], [[264, 300], [345, 360], [490, 536]], [[500, 530]], [[264, 304], [490, 530]],
];
const bars = [
  [[229, 262], [268, 284], [480, 544]], [[320, 340], [438, 446]], [[258, 300], [445, 466]], [[308, 330], [495, 542]], [[300, 315]],
  [[258, 300], [400, 480]], [[300, 315], [490, 543]], [[232, 250]], [[440, 486]], [[400, 415]],
  [[490, 515]], [[342, 360], [450, 484]], [[262, 280]], [[500, 530]], [[300, 315]], [[210, 226], [525, 540]],
  [[360, 385], [470, 543]], [[360, 385]], [[264, 300], [310, 325]], [[416, 424], [490, 525]], [[326, 416], [444, 466]],
  [[210, 226], [400, 415]], [[262, 302], [425, 445], [484, 530]], [[375, 425], [440, 465]], [[300, 320]],
];
function drawBlock() {
  let state = 20240;
  const rnd = () => {
    state = (state + 0x6d2b79f5) | 0;
    let t = Math.imul(state ^ (state >>> 15), 1 | state);
    t = (t + Math.imul(t ^ (t >>> 7), 61 | t)) ^ t;
    return ((t ^ (t >>> 14)) >>> 0) / 4294967296;
  };
  const int = (a: number, b: number) => Math.floor(a + rnd() * (b - a));
  const out = { b: "", c: "", m: "", v: "", y: "" };
  const put = (k: keyof typeof out, x: number, y: number, w: number, h: number) => {
    out[k] += `M${x} ${y}h${w}v${h}h${-w}z`;
  };
  const inside = (list: number[][], x: number) => list.some(([a, b]) => x + 42 >= a && x + 42 < b);
  for (let r = 0; r <= ROWS; r++) {
    const y = Math.round(Y0 + r * PITCH);
    put("b", X0, y, X1 - X0, 2);
    const xs = r % 2 ? [262, 311, 458] : [165, 214, 360, 409];
    xs.forEach((x) => put("y", x, y, 15, 1));
    if (r === ROWS) break;
    const clear = clearAreas[r];
    const run = bars[r];
    for (let x = X0; x < X1 - 3; x++) {
      if (inside(run, x)) {
        if ((x - X0) % 5 === 0) {
          put("c", x, y + 1, 1, 13);
          put("b", x + 2, y + 1, 2, int(2, 5));
          put("b", x + 2, y + 10, 2, 4);
        }
        continue;
      }
      if (inside(clear, x)) {
        if (rnd() < 0.14) put("b", x, y + 2, int(3, 6), int(1, 4));
        if (rnd() < 0.14) put("b", x, y + int(11, 13), int(3, 6), 3);
        continue;
      }
      const dense = x < 215 ? 1.2 : 1;
      if (rnd() < 0.34 * dense) put("b", x, y + int(0, 9), int(1, 4), int(3, 8));
      if (rnd() < 0.2 * dense) put("b", x, y + int(2, 13), int(3, 7), 1);
      if (rnd() < 0.2 * dense) put("b", x, y + int(8, 11), 2, 5);
      if (rnd() < 0.07) put("c", x, y + 1, rnd() < 0.2 ? 2 : 1, rnd() < 0.25 ? 7 : 13);
      if (rnd() < 0.015) put("v", x, y + 1, 1, 13);
    }
  }
  const clusters = [[150, 200, 66], [200, 250, 40], [250, 300, 74], [300, 345, 80], [366, 396, 56], [396, 440, 26], [440, 465, 34], [474, 499, 38]];
  clusters.forEach(([a, b, n]) => {
    for (let i = 0; i < n; i++) {
      const x = int(a, b);
      const h = rnd() < 0.3 ? int(30, 95) : int(5, 24);
      const y = int(Y0 + 2, Y0 + 350 - h);
      put("m", x, y, 1, h);
      if (rnd() < 0.16 && x < 485) put("m", x, y, int(4, 12), 1);
    }
  });
  put("m", 250, 323, 54, 1);
  return out;
}
const block = drawBlock();
const rightPins = [94, 99, 147, 157, 184, 212, 234, 240, 250];
const Pin = ({ x, y, g }: { x: number; y: number; g: string }) => (
  <g fill="none" stroke="#0ff">
    <rect x={x + 0.5} y={y + 0.5} width="10" height="10" />
    <path d={g === "i" ? `M${x + 4} ${y + 2.500}h3M${x + 5.500} ${y + 3}v5M${x + 4} ${y + 8.500}h3` : `M${x + 3.500} ${y + 5}v2l1 1h2l1-1v-2M${x + 4} ${y + 2.500}h3`} />
  </g>
);
const LayoutDrawing = () => (
  <svg width="100%" height="100%" viewBox="0 0 641 495" preserveAspectRatio="xMinYMin slice" shapeRendering="crispEdges">
    <path fill="#fff" d="M75 5h500v2H75zM75 5h1v490h-1zM571 5h2v490h-2z" />
    <path stroke="#fff" strokeDasharray="3 3" fill="none" d="M75 7.500h499.500V495M74.500 8v490" />
    <path fill="#00f" d={block.b} />
    <path fill="#0ff" d={block.c} />
    <path fill="#e08af0" d={block.v} />
    <path fill="#ff00b4" d={block.m} />
    <path fill="#ff0" d={block.y} />
    <path stroke="#80007a" strokeDasharray="6 3" fill="none" d="M147 77.500h354.500V431.500H147V77" />
    <text x="285" y="171" fill="#70006c" fontSize="12" fontFamily="Liberation Mono, monospace" textRendering="geometricPrecision">DEFAULT_VA</text>
    <path fill="#b0008a" d="M77 312h1v120h-1zM77 431h70v1H77z" />
    {rightPins.map((y) => <Pin key={y} x={568} y={y} g="o" />)}
    <Pin x={352} y={1} g="i" />
    <Pin x={389} y={1} g="o" />
    <Pin x={427} y={1} g="o" />
    <Pin x={439} y={1} g="o" />
    <Pin x={70} y={247} g="i" />
  </svg>
);

/* ---------- layer list ---------- */
type Kind = "active" | "metal" | "dummy" | "via";
const layers: [string, Kind][] = [
  ["VIA2 (22)", "active"], ["M3 (13)", "metal"], ["M3DMY (13:1)", "dummy"], ["VIA3 (23)", "via"],
  ["M4 (14)", "metal"], ["M4DMY (14:1)", "dummy"], ["VIA4 (24)", "via"], ["M5 (15)", "metal"],
  ["M5DMY (15:1)", "dummy"], ["VIA5 (25)", "via"], ["M6 (16)", "metal"],
];
const Swatch = ({ k }: { k: Kind }) => {
  if (k === "active")
    return (
      <svg width="18" height="18" viewBox="0 0 18 18">
        <path fill="#ff0" d="M1 1h16v16H1z" /><path fill="#000" d="M3 3h12v12H3z" />
        <path stroke="#ff0" fill="none" d="M4 4l10 10M14 4L4 14" />
        <path stroke="#ff0" fill="none" strokeDasharray="2 2" d="M9 3l-6 6 6 6 6-6z" />
        <path stroke="#000" fill="none" d="M1.500 3V1.500H3M15 1.500h1.500V3M1.500 15v1.500H3M15 16.500h1.500V15" />
      </svg>
    );
  return (
    <svg width="18" height="18" viewBox="0 0 18 18">
      <rect x=".5" y=".5" width="16" height="16" rx="2" fill="#fff" stroke="#000" />
      <rect x="2.500" y="2.500" width="13" height="13" fill={k === "metal" ? "#c4c4c4" : "#fff"} stroke="#888" />
      {k === "metal" && <path stroke="#8d8d8d" strokeDasharray="1 1" d="M3 4.500h12M4 6.500h11M3 8.500h12M4 10.500h11M3 12.500h12" />}
      {k === "dummy" && <path stroke="#888" fill="none" d="M5.500 3v6M12.500 3v6M3 9.500h12M9.500 10v5M5.500 6.500h7" />}
      {k === "via" && <path stroke="#888" fill="none" d="M3 3l12 12M15 3L3 15M9 3l-6 6 6 6 6-6z" strokeDasharray="2 1" />}
    </svg>
  );
};

const sideTools: [string, boolean][] = [
  ["cursor", false], ["info", true], ["zoomin", true], ["ruler", true], ["move", false], ["resize", false],
  ["mirror", false], ["spread", false], ["align", false], ["split", false], ["pulse", false], ["remove", false],
  ["add", false], ["group", false], ["distribute", false], ["grid", false], ["route", true], ["rails", true], ["redx", true],
];
const menus = [["", "F", "ile"], ["", "T", "ask"], ["", "E", "dit"], ["", "C", "reate"], ["", "V", "iew"], ["", "S", "elect"], ["", "H", "ighlight"], ["Sche", "m", "atic"], ["", "W", "indow"], ["Help", "", ""]];
const facts = [["track", "TRACK_0"], ["layer", "M1"], ["direction", "horizontal"], ["space", "0.3200"], ["start", "0.2800"], ["number_of_tracks", "318"]];
const tasks = [["cabinet", "Home"], ["cabinet", "primetime"], ["note", "PrimeTime.tcl (..."], ["console", "vlsi@elc-v1111..."], ["chip", "IC Compiler II - ..."]];
const sideTabs: [string, string, number][] = [["view", "View Setti", 126], ["prop", "Property E", 125], ["star", "Favorites", 125], ["tasks", "Tasks", 101]];

const PickerStack = styled.div`
  grid-row: 1 / 3;
  display: flex;
  flex-direction: column;
  align-items: center;
`;
function ToolPicker() {
  return (
    <PickerStack>
      <Tool n="cursor" w={24} h={20} on />
      <Arrow aria-label="Pick tool" />
    </PickerStack>
  );
}
function InputModes() {
  return (
    <>
      <Heading>Input mode</Heading>
      <Choice><Radio name="mode" />Rectangle</Choice>
      <Choice><Radio name="mode" defaultChecked />Smart</Choice>
      <Choice><Radio name="mode" />Line</Choice>
    </>
  );
}

function ViewSettings() {
  return (
    <Dock>
      <DockHead><Icon n="view" s={13} />View Settings<Grip /><Tri $d="r" $c={purple} /></DockHead>
      <DockBody>
        <DockMain>
          <Tabs><Tab $on $w={76} $h={23}>Layout.1</Tab></Tabs>
          <Frame $pad="3px 4px 0 3px">
            <Row $h={23}><PushButton $w={43} disabled>Apply</PushButton><Spacer /><Tool n="help" w={23} /><Tool n="gear" w={23} /></Row>
            <Row $h={27}>
              <Icon n="sun" s={18} />
              <SelectWrap $w={62}><select aria-label="Brightness"><option>100%</option></select></SelectWrap>
              <Spacer />Level<Spin w={41} label="Level" /><Tool n="boxcursor" w={24} /><Tool n="sliders" w={24} />
            </Row>
            <Tabs><Tab $w={69} $h={22}>Objects</Tab><Tab $on $w={64} $h={24}>Layers</Tab><Tab $w={73} $h={22}>Settings</Tab></Tabs>
            <Frame $pad="3px 4px 5px 5px">
              <Row $h={26}><Choice><Check defaultChecked />Datatypes</Choice></Row>
              <Row $h={27} $gap={3}>
                <Search><input placeholder="Filter layers by name/number" aria-label="Filter layers" /><Icon n="lens" s={14} /></Search>
                <Tool n="funnel" w={24} s={16} />
              </Row>
              <LayerBox>
                <Pane>
                  <PaneHead>
                    <Heading $size={13}>Layers</Heading>
                    <Row $h={29}>Arrange By:</Row>
                    <Row $h={13}>
                      <SelectWrap $w={95}><select aria-label="Arrange by"><option>Mask</option></select></SelectWrap>
                      <Spacer /><Tool n="sort" w={24} s={16} /><Tool n="eye" w={24} /><Tool n="checkcursor" w={22} />
                    </Row>
                  </PaneHead>
                  <Scroll>
                    <ListBg>
                      <LayerTable>
                        <tbody>
                          {layers.map(([t, k]) => (
                            <tr key={t}>
                              <td>{t}</td>
                              <td><Check aria-label={t + " visible"} defaultChecked={k === "active"} /></td>
                              <td><Check aria-label={t + " selectable"} defaultChecked disabled={k !== "active"} /></td>
                            </tr>
                          ))}
                        </tbody>
                      </LayerTable>
                    </ListBg>
                  </Scroll>
                  <HBar $thumb={143}><Tri $d="l" /><span /><Tri $d="r" /></HBar>
                </Pane>
                <Pane $split>
                  <PaneHead $icons>
                    <HeadCells>{["minus", "quad", "endin", "endout", "dots"].map((n) => <Icon key={n} n={n} s={17} />)}</HeadCells>
                    <HeadCells>{[1, 2, 3, 4, 5].map((n) => <Icon key={n} n="eyecheck" s={17} />)}</HeadCells>
                    <HeadCells>{[1, 2, 3, 4, 5].map((n) => <Icon key={n} n="checkcursor" s={17} />)}</HeadCells>
                  </PaneHead>
                  <Scroll>
                    <ListBg>
                      <SwatchTable>
                        <tbody>
                          {layers.map(([t, k]) => (
                            <tr key={t}>{[1, 2, 3, 4, 5].map((c) => <td key={c}>{(c < 5 || k === "metal") && <Swatch k={k} />}</td>)}</tr>
                          ))}
                        </tbody>
                      </SwatchTable>
                    </ListBg>
                    <VBar><Tri $d="u" /><span /><Tri $d="d" /></VBar>
                  </Scroll>
                  <HBar $thumb={27} $w={91}><Tri $d="l" /><span /><Tri $d="r" /></HBar>
                </Pane>
              </LayerBox>
            </Frame>
            <Row $h={29}>
              Preset&nbsp;
              <SelectWrap $pad={18}><Icon n="asterisk" s={13} /><select aria-label="Preset"><option>Default</option></select></SelectWrap>
              <Tool n="refresh" w={27} /><Tool n="burger" w={24} s={16} />
            </Row>
          </Frame>
        </DockMain>
        <SideTabs>
          {sideTabs.map(([n, t, h], i) => (
            <SideTab key={t} $h={h} $on={i === 0}>
              <Icon n={n} s={16} />
              <SideLabel>{t}</SideLabel>
              <CloseX aria-label={"Close " + t}><Icon n="x" s={15} /></CloseX>
            </SideTab>
          ))}
        </SideTabs>
      </DockBody>
    </Dock>
  );
}

export default function App() {
  return (
    <Page>
      <Global />
      <TopBar>
        <TopItem><Icon n="centos" s={15} />Applications</TopItem>
        <TopItem>Places</TopItem>
        <TopItem>BlockWindow.1</TopItem>
        <Clock>{"Tue  2:47 AM"}</Clock>
        <Tray><Icon n="net" s={17} /><Icon n="sound" s={17} /><Icon n="battery" s={18} /></Tray>
      </TopBar>
      <TitleBar>
        <Title>IC Compiler II - BlockWindow.1 - Design Planning - sar.dlib:routing.design [write]</Title>
        <WinButtons><Tool n="min" w={20} /><Tool n="max" w={20} /><Tool n="close" w={20} s={16} /></WinButtons>
      </TitleBar>
      <MenuBar>
        <Icon n="chip" s={17} />
        <Menus>
          {menus.map(([a, u, b]) => <MenuItem key={a + u + b}>{a}<u>{u}</u>{b}</MenuItem>)}
          <Icon n="lens" s={16} />
        </Menus>
        <MenuEnd><Tool n="pan" w={23} s={16} /><Tool n="restore" w={23} s={16} /><Tool n="popout" w={23} /><Tool n="bigx" w={23} s={14} /></MenuEnd>
      </MenuBar>
      <ToolRow>
        <ToolGroup $w={61}><Handle /><Tool n="open" /><Tool n="save" /></ToolGroup>
        <ToolGroup $w={115}><Handle /><Tool n="marker" /><Arrow aria-label="Highlight" /><Tool n="greyx" /><Arrow aria-label="Clear" /><Tool n="burst" /></ToolGroup>
        <ToolGroup $w={91}><Handle /><Tool n="zoomfit" /><Arrow aria-label="Fit" /><Tool n="zoomcheck" /><Arrow aria-label="Zoom" /></ToolGroup>
        <ToolGroup $w={61}><Handle /><Tool n="zoomback" /><Tool n="zoomfwd" /></ToolGroup>
        <ToolGroup $w={106}><Handle /><Tool n="undo" w={26} /><Arrow $off aria-label="Undo list" /><Tool n="redo" w={26} /><Arrow $off aria-label="Redo list" /></ToolGroup>
        <ToolGroup $w={194}><Handle /><Spin w={41} label="Depth" /><Tool n="boxcursor" w={27} /><Tool n="sliders" w={27} /><Tool n="down" w={27} /><Tool n="up" w={27} /><Tool n="top" w={27} /></ToolGroup>
        <ToolGroup $w={169}><Handle /><Tool n="chat" /><Arrow aria-label="Notes" /><Tool n="three" /><Arrow aria-label="Measure" /><Tool n="bricks" /><Arrow aria-label="Pins" /><Tool n="camera" /><Arrow aria-label="Snapshot" /></ToolGroup>
        <ToolGroup $w={86}><Handle /><Tool n="cc" /><Tool n="plug" /><More>»</More></ToolGroup>
        <ToolGroup $w={71}><Handle /><Tool n="drc" w={26} /><Arrow aria-label="DRC" /><More>»</More></ToolGroup>
        <ToolGroup><Handle /><Tool n="layers" w={26} /><Arrow aria-label="Layers" /><More>»</More></ToolGroup>
      </ToolRow>
      <OptionBar>
        <Handle $h={46} />
        <OptionGroup as="div" $bare $w={32} $cols="26px"><ToolPicker /></OptionGroup>
        <OptionGroup $wide $w={183} $cols="82px 1fr"><InputModes /></OptionGroup>
        <OptionGroup $w={143}>
          <Heading>Rectangle Intersect</Heading>
          <Choice><Check />Enable</Choice>
        </OptionGroup>
        <OptionGroup $w={56}>
          <Heading>Partial</Heading>
          <Choice><Check />Yes</Choice>
        </OptionGroup>
        <OptionGroup $w={144}>
          <Heading>Selection</Heading>
          <Actions>
            <SelectWrap $w={80}><select aria-label="Selection"><option>Replace</option></select></SelectWrap>
            <PushButton $w={50}>Clear</PushButton>
          </Actions>
        </OptionGroup>
        <OptionGroup $w={159} $cols="45px 1fr">
          <Heading>Query</Heading>
          <Choice><Check defaultChecked />Map</Choice>
          <span />
          <Choice><Check defaultChecked />Annotations</Choice>
        </OptionGroup>
        <OptionGroup as="div" $w={32} $cols="24px"><span /><Tool n="help" /></OptionGroup>
      </OptionBar>
      <Middle>
        <SideTools>
          <SideHandle />
          {sideTools.map(([n, more], i) => (
            <SideRow key={n}><Tool n={n} w={24} h={22} on={i === 0} />{more && <Arrow $w={15} aria-label={n + " options"} />}</SideRow>
          ))}
          <SideHandle $line />
          <SideRow><Tool n="lock" w={24} s={16} /><Arrow $w={15} aria-label="lock options" /></SideRow>
          <SideRow><Tool n="unlock" w={24} /></SideRow>
          <PlainButton $w={42} $h={20} aria-label="More tools"><Icon n="chevrons" s={14} /></PlainButton>
        </SideTools>
        <Center>
          <Upper>
            <Canvas>
              <LayoutDrawing />
              <Tip>
                <dl>{facts.map(([k, v]) => <React.Fragment key={k}><dt>{k}</dt><dd>{v}</dd></React.Fragment>)}</dl>
                <p>2/3 (F1=cycle;?=query;Ctrl+F1=focus)</p>
              </Tip>
            </Canvas>
            <ViewSettings />
          </Upper>
          <ConsoleBar>
            <ConsoleGrip><Tri $d="u" $c={purple} /></ConsoleGrip>
            <BottomTab $on $w={119}><Icon n="term" s={17} /><button>Console</button><CloseX aria-label="Close console"><Icon n="x" s={15} /></CloseX></BottomTab>
            <BottomTab $w={146}><Icon n="edit" s={16} /><button>Script Editor</button><CloseX aria-label="Close editor"><Icon n="x" s={15} /></CloseX></BottomTab>
          </ConsoleBar>
        </Center>
      </Middle>
      <StatusBar>
        <Icon n="label" s={16} />
        <span>&nbsp;Click objects or drag a box to select (Hold Ctrl to add, Shift to remove)</span>
        <Spacer />
        <em>No Grid</em>
        <Coord><b>XY</b> 91.750, 89.505</Coord>
        <Icon n="plane" s={17} />
        <Clip>efinition: TRACK_3</Clip>
        <StatusIcons><Icon n="pick" s={17} /><Icon n="list" s={17} /></StatusIcons>
      </StatusBar>
      <TaskBar>
        <ShowDesktop aria-label="Show desktop"><Icon n="desk" s={16} /></ShowDesktop>
        {tasks.map(([i, t], k) => <Task key={t} $on={k === 4}><Icon n={i} s={22} />{t}</Task>)}
        <Pager><Desk $on aria-label="Desktop 1" /><Desk aria-label="Desktop 2" /><Desk aria-label="Desktop 3" /><Desk aria-label="Desktop 4" /></Pager>
      </TaskBar>
    </Page>
  );
}
